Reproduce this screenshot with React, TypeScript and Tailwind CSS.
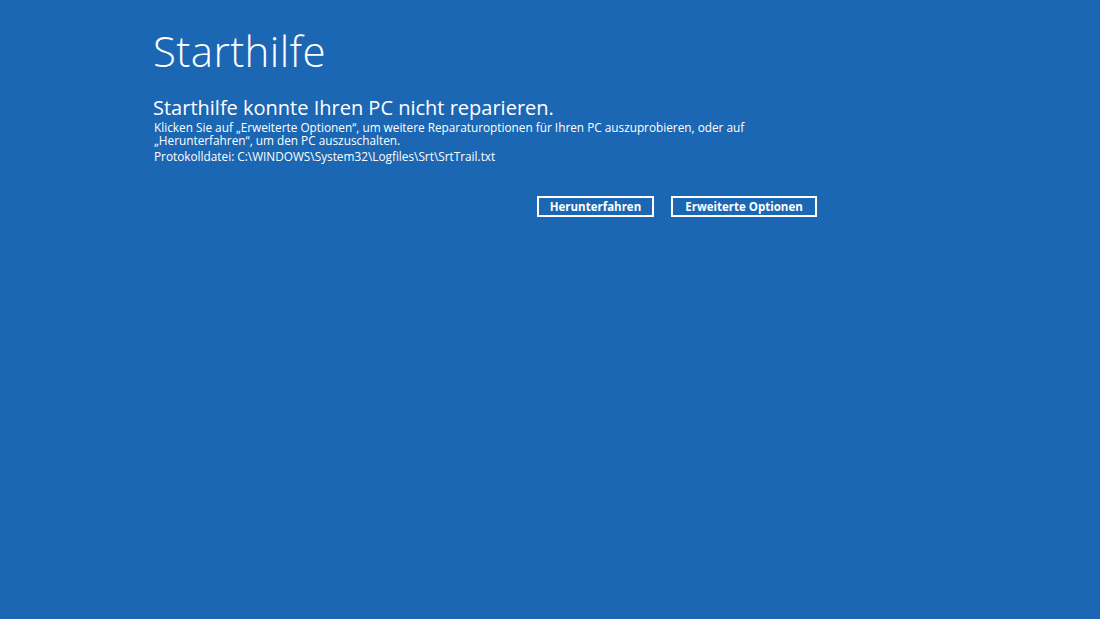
import React from 'react';

function App() {
  return (
    <div className="min-h-screen w-full bg-[#1b67b3] text-white" style={{ fontFamily: '"Open Sans", "Noto Sans", sans-serif' }}>
      <div className="w-[664px] pl-[153px] pt-[26px] box-content">
        <h1 className="text-[42px] font-light leading-[50px] tracking-[0.4px]">Starthilfe</h1>
        <h2 className="mt-[21px] text-[20px] font-normal leading-[22px]">Starthilfe konnte Ihren PC nicht reparieren.</h2>
        <p className="text-[11.8px] leading-[13px] mt-[2px] pl-[1px] w-[620px]">
          Klicken Sie auf „Erweiterte Optionen“, um weitere Reparaturoptionen für Ihren PC auszuprobieren, oder auf „Herunterfahren“, um den PC auszuschalten.
        </p>
        <p className="text-[11.8px] leading-[13px] mt-[3px] pl-[1px]">Protokolldatei: C:\WINDOWS\System32\Logfiles\Srt\SrtTrail.txt</p>
        <div className="mt-[33px] flex justify-end gap-[17px]">
          <button className="h-[21px] w-[117px] border-2 border-white text-[11.5px] font-bold leading-none">Herunterfahren</button>
          <button className="h-[21px] w-[146px] border-2 border-white text-[11.5px] font-bold leading-none">Erweiterte Optionen</button>
        </div>
      </div>
    </div>
  );
}

export default App;
